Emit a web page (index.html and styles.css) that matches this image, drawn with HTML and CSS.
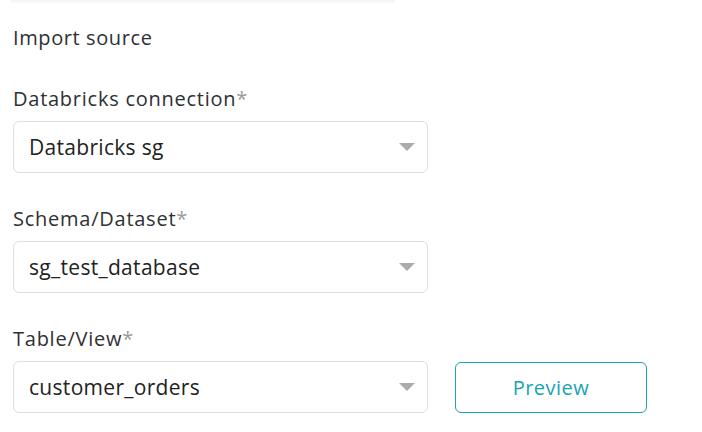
FILE: index.html
```html
<!DOCTYPE html>
<html>
<head>
<meta charset="utf-8">
<link rel="stylesheet" href="styles.css">
</head>
<body>
<div class="page">
  <div class="edge"></div>
  <div class="title">Import source</div>
  <div class="field">
    <div class="label">Databricks connection<span class="req">*</span></div>
    <div class="row">
      <div class="select"><span>Databricks sg</span><span class="caret"></span></div>
    </div>
  </div>
  <div class="field">
    <div class="label">Schema/Dataset<span class="req">*</span></div>
    <div class="row">
      <div class="select"><span>sg_test_database</span><span class="caret"></span></div>
    </div>
  </div>
  <div class="field">
    <div class="label">Table/View<span class="req">*</span></div>
    <div class="row">
      <div class="select"><span>customer_orders</span><span class="caret"></span></div>
      <button class="btn">Preview</button>
    </div>
  </div>
</div>
</body>
</html>
```
FILE: styles.css
```css
html, body {
  margin: 0;
  padding: 0;
  background: #ffffff;
}
.page {
  font-family: "Open Sans", "Noto Sans", sans-serif;
  color: #2f3033;
  padding: 0 0 0 13px;
  width: 702px;
  box-sizing: border-box;
}
.edge {
  height: 4px;
  margin: 0 307px 0 -3px;
  border-radius: 0 0 14px 14px;
  background: linear-gradient(#f3f3f3, #ffffff);
}
.title {
  font-size: 20px;
  line-height: 24px;
  letter-spacing: 0.6px;
  margin-top: 22px;
}
.field {
  margin-top: 37px;
}
.field + .field {
  margin-top: 34px;
}
.label {
  font-size: 20px;
  line-height: 24px;
  letter-spacing: 0.75px;
}
.req {
  color: #9a9a9a;
}
.row {
  display: flex;
  align-items: center;
  gap: 27px;
  margin-top: 10px;
}
.select {
  width: 415px;
  height: 52px;
  box-sizing: border-box;
  border: 1px solid #dcdfe6;
  border-radius: 6px;
  display: flex;
  align-items: center;
  justify-content: space-between;
  padding: 0 12px 0 15px;
  font-size: 21px;
  letter-spacing: 0.3px;
  color: #222;
}
.caret {
  width: 0;
  height: 0;
  border-left: 8px solid transparent;
  border-right: 8px solid transparent;
  border-top: 8px solid #ababab;
}
.btn {
  width: 192px;
  height: 51px;
  box-sizing: border-box;
  background: #fff;
  border: 1px solid #17a4b5;
  border-radius: 6px;
  color: #17a4b5;
  font-family: inherit;
  font-size: 20px;
  letter-spacing: 0.5px;
  padding: 0;
}
```
